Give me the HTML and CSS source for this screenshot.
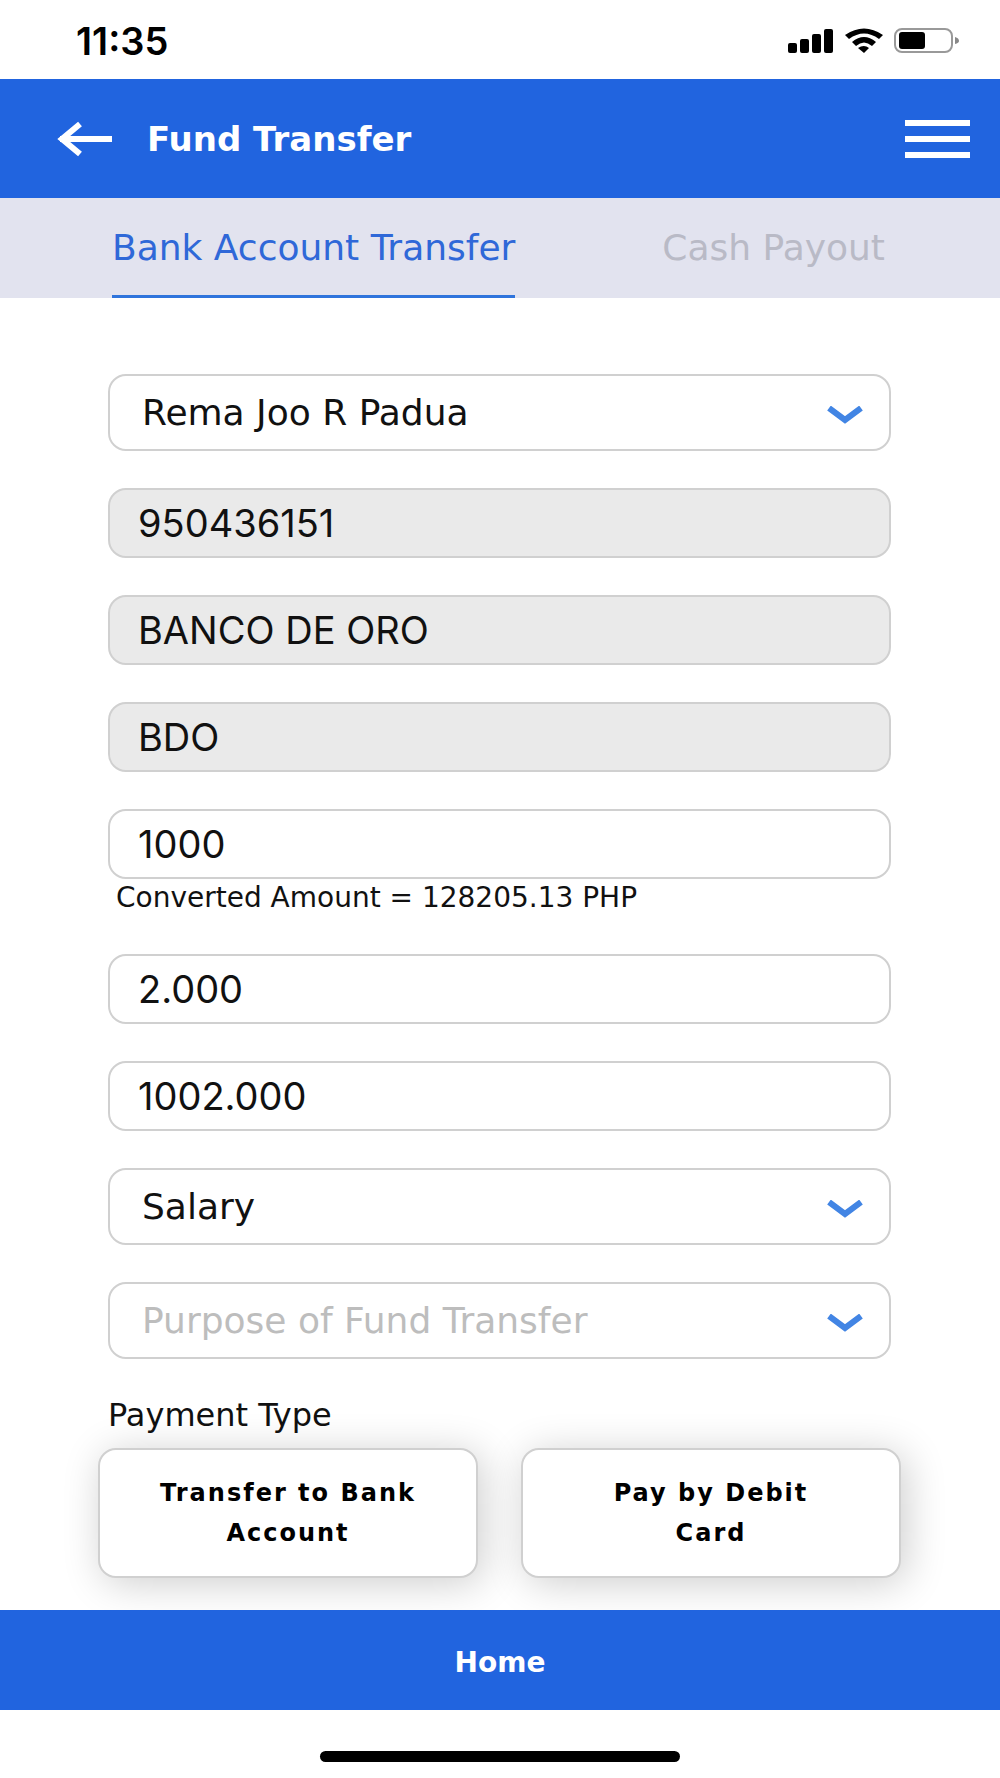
FILE: index.html
```html
<!DOCTYPE html>
<html lang="en">
<head>
    <meta charset="UTF-8">
    <meta name="viewport" content="width=device-width, initial-scale=1.0">
    <title>Fund Transfer</title>
    <link rel="stylesheet" href="styles.css">
</head>
<body>
    <div class="status-bar">
        <span class="time">11:35</span>
        <svg class="status-icons" width="172" height="26" viewBox="0 0 172 26">
            <!-- signal -->
            <rect x="0" y="15" width="9" height="10" rx="2"/>
            <rect x="12" y="11" width="9" height="14" rx="2"/>
            <rect x="24" y="6" width="9" height="19" rx="2"/>
            <rect x="36" y="1" width="9" height="24" rx="2"/>
            <!-- wifi -->
            <path d="M57 7Q76 -6 95 7L91 11Q76 0 61 11Z"/>
            <path d="M64 14Q76 4 88 14L84 18Q76 11 68 18Z"/>
            <path d="M70 20Q76 16 81 20L76 25Z"/>
            <!-- battery -->
            <rect x="107" y="1" width="57" height="23" rx="7" fill="none" stroke="#999" stroke-width="2"/>
            <rect x="111" y="4" width="26" height="17" rx="3"/>
            <path d="M167 9Q171 10 171 13Q171 15 167 16Z" fill="#888"/>
        </svg>
    </div>
    <div class="header">
        <button type="button" class="icon-button" aria-label="Back">
            <svg width="56" height="36" viewBox="0 0 56 36" fill="none" stroke="#fff" stroke-width="6">
                <path d="M3 18H55M23 3L5 18L23 33"/>
            </svg>
        </button>
        <h1>Fund Transfer</h1>
        <button type="button" class="icon-button" aria-label="Menu">
            <svg width="65" height="38" viewBox="0 0 65 38" fill="#fff">
                <rect width="65" height="6"/>
                <rect y="16" width="65" height="6"/>
                <rect y="32" width="65" height="6"/>
            </svg>
        </button>
    </div>
    <div class="tabs">
        <a href="#" class="tab active">Bank Account Transfer</a>
        <a href="#" class="tab">Cash Payout</a>
    </div>
    <form class="form">
        <div class="select-box">
            <select aria-label="Beneficiary">
                <option>Rema Joo R Padua</option>
            </select>
            <svg class="chevron" width="36" height="19" viewBox="0 0 36 19"><path d="M2 2L18 14L34 2"/></svg>
        </div>
        <input type="text" value="950436151" aria-label="Account number" readonly>
        <input type="text" value="BANCO DE ORO" aria-label="Bank name" readonly>
        <input type="text" value="BDO" aria-label="Bank code" readonly>
        <div class="amount">
            <input type="text" id="amount" value="1000" aria-label="Amount">
            <label for="amount">Converted Amount = 128205.13 PHP</label>
        </div>
        <input type="text" value="2.000" aria-label="Charges">
        <input type="text" value="1002.000" aria-label="Total amount">
        <div class="select-box">
            <select aria-label="Source of income">
                <option>Salary</option>
            </select>
            <svg class="chevron" width="36" height="19" viewBox="0 0 36 19"><path d="M2 2L18 14L34 2"/></svg>
        </div>
        <div class="select-box">
            <select class="placeholder" aria-label="Purpose of Fund Transfer">
                <option>Purpose of Fund Transfer</option>
            </select>
            <svg class="chevron" width="36" height="19" viewBox="0 0 36 19"><path d="M2 2L18 14L34 2"/></svg>
        </div>
        <div class="payment">
            <h2>Payment Type</h2>
            <div class="payment-options">
                <button type="button">Transfer to Bank Account</button>
                <button type="button">Pay by Debit Card</button>
            </div>
        </div>
    </form>
    <div class="footer">
        <a href="#">Home</a>
    </div>
    <div class="home-indicator"></div>
</body>
</html>
```
FILE: styles.css
```css
* {
    box-sizing: border-box;
}
body {
    margin: 0;
    background-color: #fff;
    color: #111;
    font-family: "DejaVu Sans", sans-serif;
    font-size: 36px;
}
.status-bar {
    display: flex;
    justify-content: space-between;
    align-items: center;
    height: 79px;
    padding: 2px 40px 0 76px;
}
.time {
    color: #000;
    font-family: Inter, sans-serif;
    font-size: 38px;
    font-weight: 600;
}
.header {
    display: flex;
    align-items: center;
    height: 119px;
    padding: 0 30px 0 57px;
    background-color: #2164df;
    color: #fff;
}
.header h1 {
    flex: 1;
    margin: 0 0 0 34px;
    font-size: 34px;
}
.icon-button {
    display: flex;
    padding: 0;
    border: none;
    background: none;
    cursor: pointer;
}
.tabs {
    display: flex;
    justify-content: space-between;
    height: 100px;
    padding: 0 115px 0 112px;
    background-color: #e2e3ef;
}
.tab {
    color: #b9bac6;
    line-height: 100px;
    text-decoration: none;
}
.tab.active {
    border-bottom: 3px solid #2f74dc;
    color: #2f68d8;
}
.form {
    display: flex;
    flex-direction: column;
    gap: 37px;
    padding: 76px 109px 32px 108px;
}
input, select {
    display: block;
    width: 100%;
    border: 2px solid #d0d0d0;
    border-radius: 18px;
    background-color: #fff;
    color: #111;
}
input {
    height: 70px;
    padding: 0 28px;
    font-family: Inter, sans-serif;
    font-size: 38px;
}
input:read-only {
    background-color: #eaeaea;
}
select {
    height: 77px;
    padding: 0 32px;
    appearance: none;
    font-family: inherit;
    font-size: 36px;
}
select.placeholder {
    color: #bdbdbd;
}
.select-box {
    position: relative;
}
.chevron {
    position: absolute;
    top: 32px;
    right: 28px;
    fill: none;
    stroke: #4285e4;
    stroke-width: 6px;
    pointer-events: none;
}
.amount label {
    display: block;
    height: 38px;
    padding-left: 8px;
    font-size: 28px;
    line-height: 38px;
}
.payment h2 {
    margin: 0 0 14px;
    font-size: 32px;
    font-weight: normal;
    line-height: 38px;
}
.payment-options {
    display: grid;
    grid-template-columns: 1fr 1fr;
    gap: 43px;
    margin: 0 -10px;
}
.payment-options button {
    height: 130px;
    padding: 0 54px;
    border: 2px solid #d0d0d0;
    border-radius: 18px;
    background-color: #fff;
    box-shadow: 5px 5px 40px rgba(0, 0, 0, 0.2);
    color: #000;
    font-family: inherit;
    font-size: 24px;
    font-weight: bold;
    letter-spacing: 2px;
    line-height: 40px;
    cursor: pointer;
}
.footer {
    position: relative;
    height: 100px;
    background-color: #2164df;
    line-height: 100px;
    text-align: center;
}
.footer a {
    color: #fff;
    font-size: 28px;
    font-weight: bold;
    text-decoration: none;
}
.home-indicator {
    width: 36%;
    height: 11px;
    margin: 41px auto 16px;
    border-radius: 6px;
    background-color: #000;
}
```
